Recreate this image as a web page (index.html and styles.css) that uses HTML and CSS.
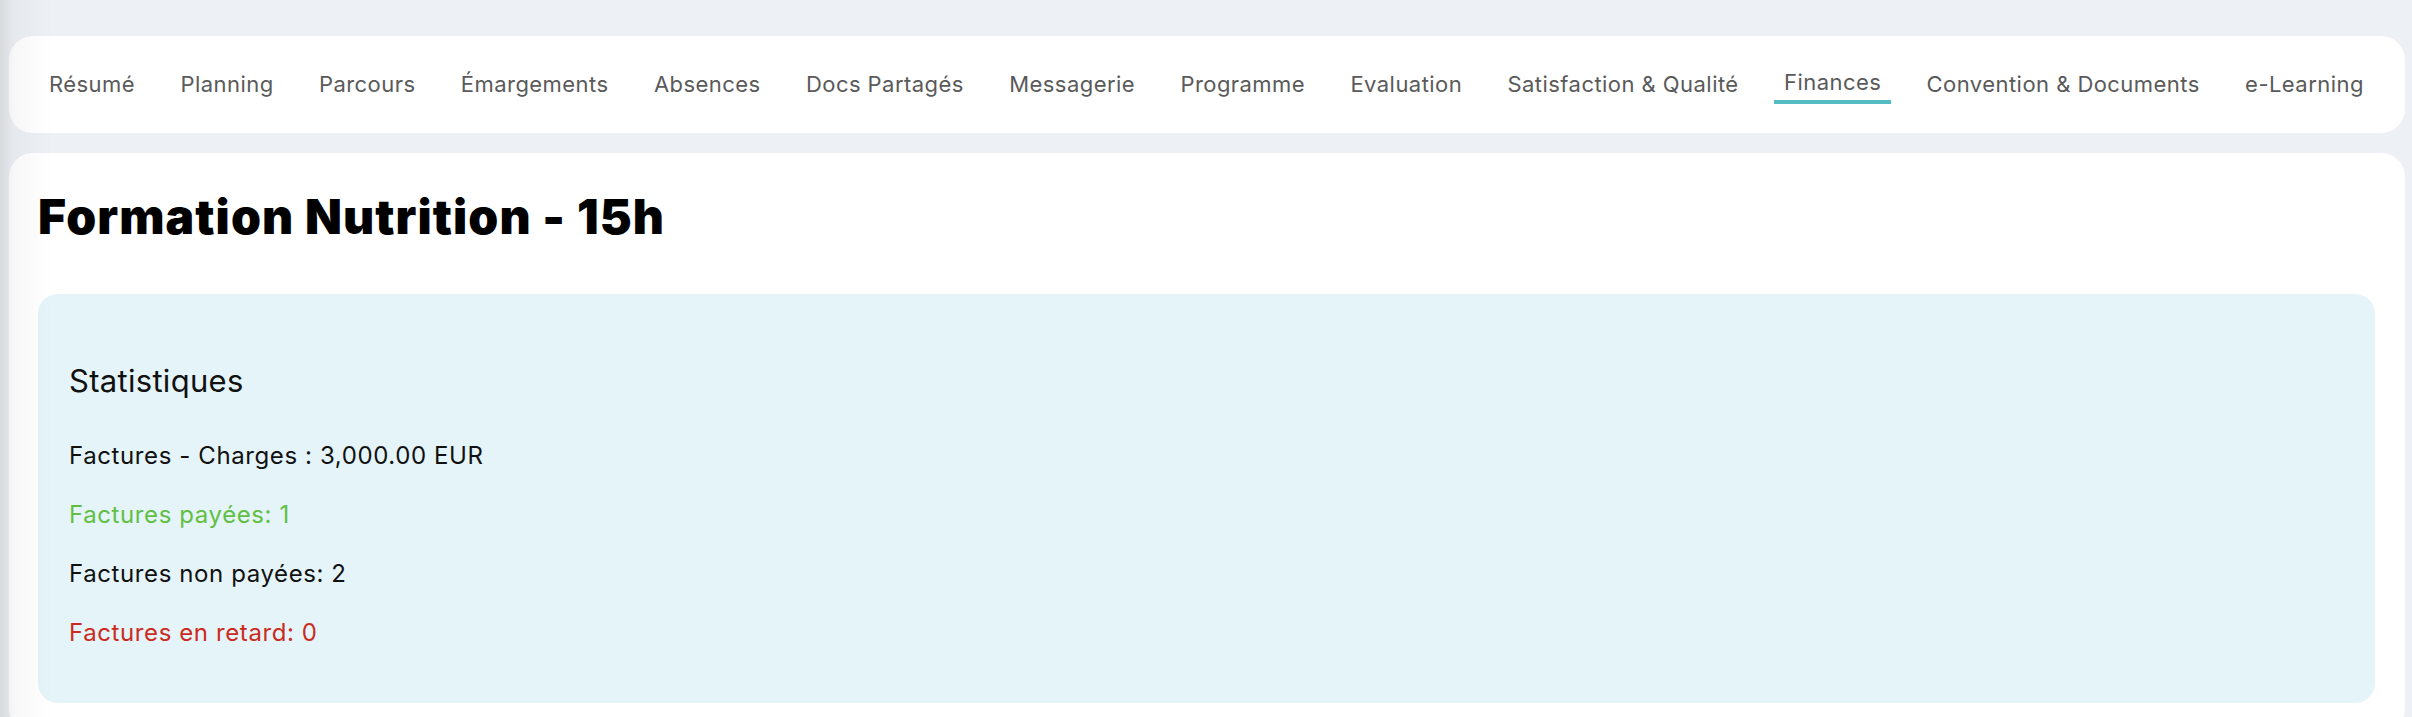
FILE: index.html
```html
<!DOCTYPE html>
<html lang="fr">
<head>
<meta charset="utf-8">
<title>Formation Nutrition - 15h</title>
<link rel="stylesheet" href="styles.css">
</head>
<body>
<div class="side-shadow"></div>
<nav class="tabs">
  <a class="tab">Résumé</a>
  <a class="tab">Planning</a>
  <a class="tab">Parcours</a>
  <a class="tab">Émargements</a>
  <a class="tab">Absences</a>
  <a class="tab">Docs Partagés</a>
  <a class="tab">Messagerie</a>
  <a class="tab">Programme</a>
  <a class="tab">Evaluation</a>
  <a class="tab">Satisfaction &amp; Qualité</a>
  <a class="tab active">Finances</a>
  <a class="tab">Convention &amp; Documents</a>
  <a class="tab">e-Learning</a>
</nav>
<main class="card">
  <h1 class="title">Formation Nutrition - 15h</h1>
  <section class="stats">
    <h2 class="stats-title">Statistiques</h2>
    <p class="stat">Factures - Charges : 3,000.00 EUR</p>
    <p class="stat paid">Factures payées: 1</p>
    <p class="stat">Factures non payées: 2</p>
    <p class="stat late">Factures en retard: 0</p>
  </section>
</main>
</body>
</html>
```

FILE: styles.css
```css
* { box-sizing: border-box; }

html, body {
  margin: 0;
  background: #edf0f4;
  font-family: Inter, "Noto Sans", "Liberation Sans", sans-serif;
}

body {
  padding: 36px 7px 0 9px;
  overflow: hidden;
}

.side-shadow {
  position: fixed;
  left: 0;
  top: 0;
  bottom: 0;
  width: 52px;
  background: linear-gradient(to right, rgba(0, 0, 0, 0.085), rgba(0, 0, 0, 0.03) 25%, rgba(0, 0, 0, 0));
  pointer-events: none;
  z-index: 5;
}

.tabs {
  height: 97px;
  background: #fff;
  border-radius: 24px;
  display: flex;
  align-items: center;
  justify-content: space-between;
  padding: 0 31px 0 30px;
}

.tab {
  font-size: 22px;
  line-height: 26px;
  color: #5a5a5a;
  padding: 3px 10px 5px;
  white-space: nowrap;
  letter-spacing: 0.45px;
}

.tab.active {
  border-bottom: 4px solid #55bcc4;
}

.card {
  margin-top: 20px;
  background: #fff;
  border-radius: 24px;
  padding: 34px 30px 30px 29px;
}

.title {
  margin: 0 0 47px;
  font-size: 48px;
  line-height: 60px;
  font-weight: 900;
  color: #000;
  letter-spacing: 1.1px;
}

.stats {
  background: #e4f4f8;
  border-radius: 20px;
  padding: 67px 30px 41px 31px;
}

.stats-title {
  margin: 0 0 25px;
  font-size: 31px;
  line-height: 40px;
  font-weight: 400;
  color: #111;
  letter-spacing: 0.3px;
}

.stat {
  margin: 0;
  font-size: 24px;
  line-height: 59px;
  color: #111;
  letter-spacing: 0.6px;
}

.stat.paid { color: #62bf44; }
.stat.late { color: #cc2a21; }
```
